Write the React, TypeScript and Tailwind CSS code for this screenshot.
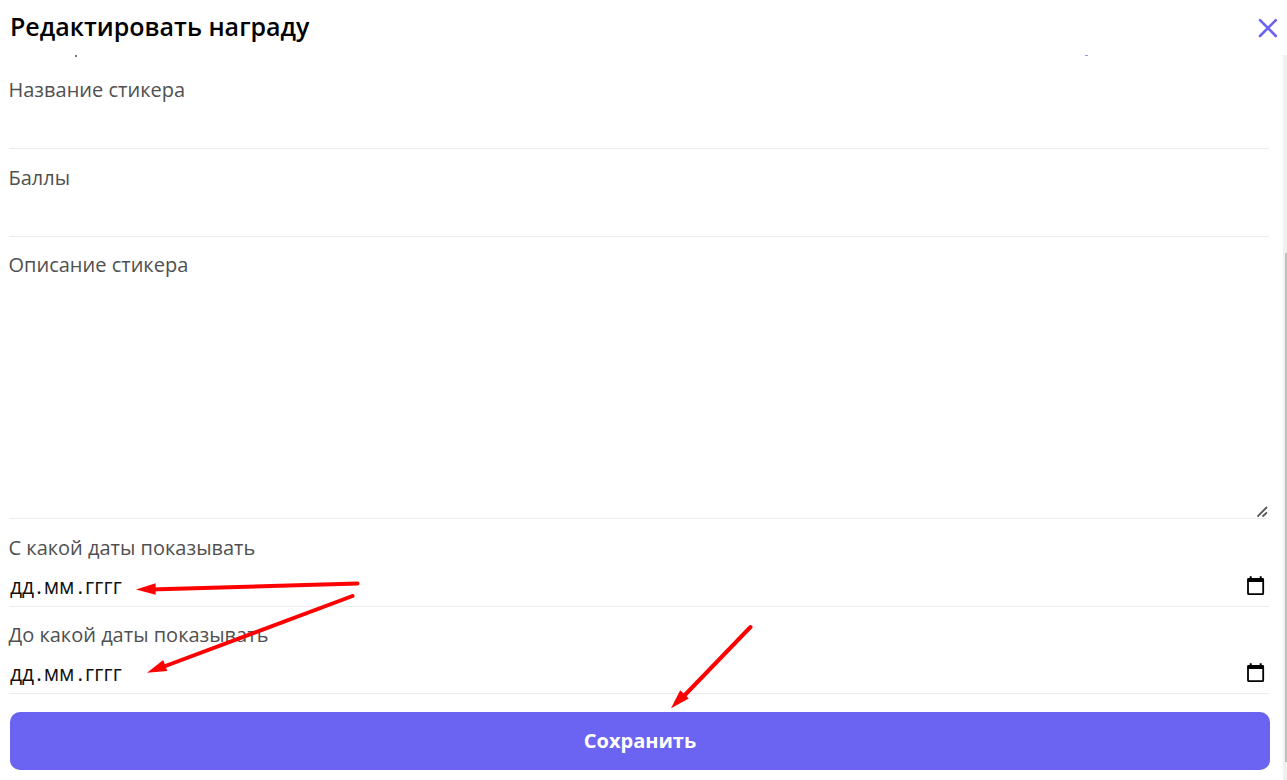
import type { ReactNode } from 'react';

interface FieldProps {
  label: string;
  className: string;
  children?: ReactNode;
}

function Field({ label, className, children }: FieldProps) {
  return (
    <div className={`flex flex-col border-b border-[#ebebeb] ${className}`}>
      <label className="h-[29px] text-[20px] leading-[29px] text-[#505050] whitespace-nowrap -ml-[0.5px]">
        {label}
      </label>
      {children}
    </div>
  );
}

function CalendarIcon() {
  return (
    <svg className="mr-[3px] mt-1 h-5 w-5" viewBox="0 0 20 20" fill="none">
      <path d="M4.7 0.3V3M14.7 0.3V3" stroke="#000" strokeWidth="2" />
      <rect x="2" y="3" width="15.2" height="15.2" rx="1" stroke="#000" strokeWidth="1.8" />
      <path d="M1.5 2.2H17.7V6H1.5Z" fill="#000" />
    </svg>
  );
}

function DateInput() {
  return (
    <div className="flex h-[43px] items-center justify-between">
      <div className="flex items-center pl-px pt-[5px] text-[21px] leading-8 text-[#111]">
        <span>дд</span>
        <span className="px-[2px]">.</span>
        <span>мм</span>
        <span className="pl-[3px] pr-[2px]">.</span>
        <span className="tracking-[0.2px]">гггг</span>
      </div>
      <CalendarIcon />
    </div>
  );
}

function Arrows() {
  return (
    <svg
      className="pointer-events-none absolute left-0 top-0 h-[780px] w-[1287px]"
      viewBox="0 0 1287 780"
      stroke="#f00"
      strokeWidth="4"
      strokeLinecap="round"
    >
      <path d="M357.5 583.5L150 589.5M352.5 596L160 668M750.5 627L682 698" />
      <g fill="#f00" stroke="none">
        <path d="M136 589.6L155.6 583.2V594.8Z" />
        <path d="M147 672.7L163.2 660L167.3 671Z" />
        <path d="M671 708.3L680.2 690.2L688.8 698.4Z" />
      </g>
    </svg>
  );
}

export default function App() {
  return (
    <div className="relative flex h-[780px] w-[1287px] flex-col overflow-hidden bg-white font-['Open_Sans','Noto_Sans',sans-serif]">
      <header className="flex h-[55px] shrink-0 items-center justify-between pl-[10px] pr-[9px]">
        <h1 className="pb-1 text-[25px] font-semibold leading-[50px] text-black">Редактировать награду</h1>
        <button type="button" aria-label="Закрыть">
          <svg className="h-5 w-5" viewBox="0 0 20 20" fill="none">
            <path d="M2 2.2L17.8 18M17.8 2.2L2 18" stroke="#6b63f1" strokeWidth="2.6" strokeLinecap="round" />
          </svg>
        </button>
      </header>

      <div className="flex min-h-0 flex-1 justify-between">
        <form className="flex w-[1270px] flex-col pl-[9px] pr-px">
          {/* Bottom edge of the row scrolled under the header */}
          <div className="flex h-[6px] items-start justify-between pl-[66px] pr-[181px]">
            <span className="h-[2px] w-[2px] bg-[#777]" />
            <span className="h-px w-[3px] bg-[#9b96ef]" />
          </div>
          <Field label="Название стикера" className="h-[88px] pt-[14px]" />
          <Field label="Баллы" className="h-[88px] pt-[14px]" />
          <Field label="Описание стикера" className="h-[282px] pt-[13px]">
            <div className="flex flex-1 items-end justify-end">
              <svg className="h-3 w-3" viewBox="0 0 12 12" stroke="#555" strokeWidth="1.8">
                <path d="M0.5 10.5L10 1M5.5 10.5L10 6.3" />
              </svg>
            </div>
          </Field>
          <Field label="С какой даты показывать" className="h-[88px] pt-[14px]">
            <DateInput />
          </Field>
          <Field label="До какой даты показывать" className="h-[87px] pt-[13px]">
            <DateInput />
          </Field>
          <button
            type="button"
            className="-mr-px ml-px mt-[18px] h-[58px] rounded-[10px] bg-[#6b63f1] text-[20px] font-bold text-white"
          >
            Сохранить
          </button>
        </form>
        <div className="flex w-1 flex-col items-end bg-[#f0f0f0] pt-[198px]">
          <div className="h-[509px] w-[2px] bg-[#c0c0c0]" />
        </div>
      </div>

      <Arrows />
    </div>
  );
}
